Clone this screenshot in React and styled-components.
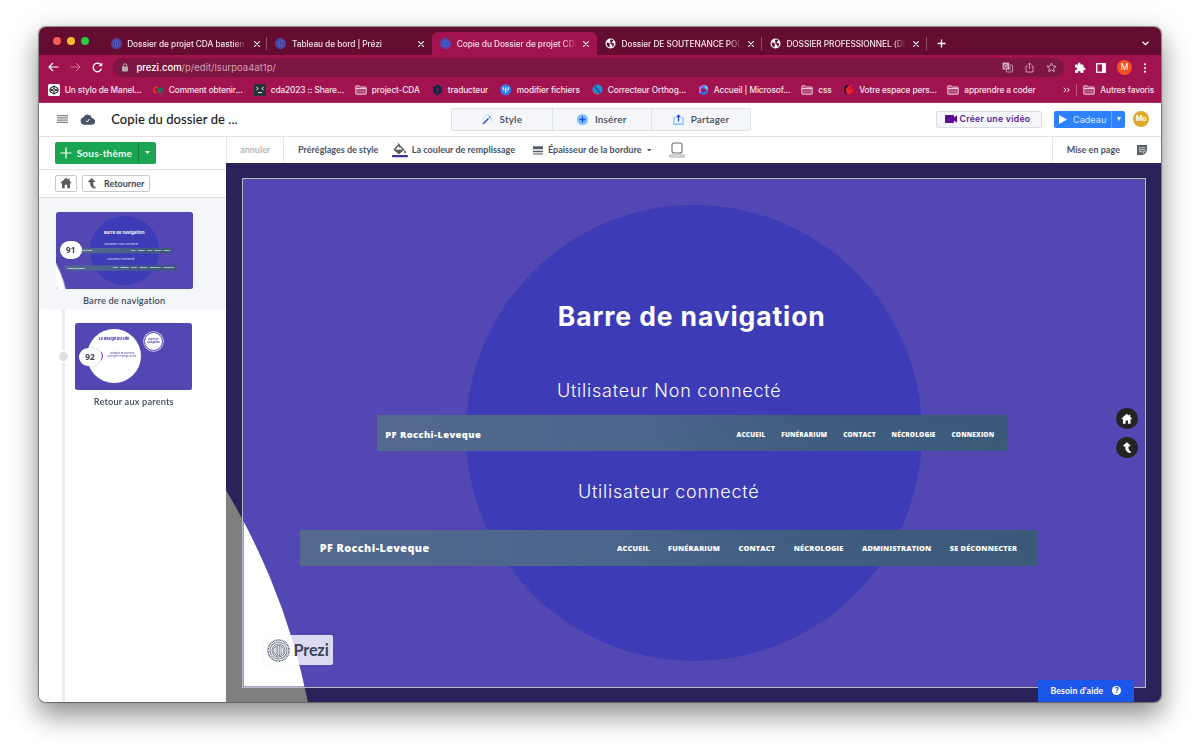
import React from 'react';
import styled, { createGlobalStyle, css } from 'styled-components';

const Global = createGlobalStyle`
  * { box-sizing: border-box; }
  body { margin: 0; background: #fff; font-family: Inter, sans-serif; overflow: hidden; }
`;

const Desktop = styled.div`
  width: 1200px;
  height: 753px;
  padding: 26.5px 39px 51px 38.7px;
  background: #fff;
`;

const Window = styled.div`
  width: 1122.3px;
  height: 675px;
  display: flex;
  flex-direction: column;
  border-radius: 7px;
  overflow: hidden;
  background: #fff;
  box-shadow: 0 0 1px 0.5px rgba(0, 0, 0, 0.4), 0 13px 26px 1px rgba(0, 0, 0, 0.38), 0 6px 40px rgba(0, 0, 0, 0.1);
`;

/* ---------- browser chrome ---------- */

const TabStrip = styled.div`
  height: 28.5px;
  flex: none;
  display: flex;
  background: #640d31;
`;

const Lights = styled.div`
  width: 64px;
  padding: 10.5px 0 0 14.3px;
  display: flex;
  gap: 5.8px;
`;

const Light = styled.i`
  width: 8px;
  height: 8px;
  border-radius: 50%;
  background: ${p => p.$color};
`;

const Tab = styled.div`
  position: relative;
  width: 164.8px;
  height: 23px;
  margin-top: 5.5px;
  padding: 0 7.8px 0 8px;
  display: flex;
  align-items: center;
  gap: 5.5px;
  color: #f4e6ec;
  ${p => p.$active && css`
    background: #a1134e;
    border-radius: 6px 6px 0 0;
  `}
  ${p => p.$divider && css`
    &::after {
      content: '';
      position: absolute;
      right: 0;
      top: 5px;
      width: 1px;
      height: 13px;
      background: #8f4f6b;
    }
  `}
`;

const TabTitle = styled.span`
  flex: 1;
  overflow: hidden;
  white-space: nowrap;
  font-size: 8.3px;
  font-weight: 500;
  line-height: 14px;
  letter-spacing: -0.06px;
  mask-image: linear-gradient(90deg, #000 88%, transparent 99%);
`;

const CloseMark = styled.svg`
  width: 6px;
  height: 6px;
  flex: none;
`;

const NewTab = styled.div`
  flex: 1;
  display: flex;
  align-items: center;
  justify-content: space-between;
  padding: 5px 12px 0 10.5px;
`;

const Toolbar = styled.div`
  height: 25px;
  flex: none;
  display: flex;
  align-items: center;
  padding: 0 12.5px 0 9.3px;
  background: #a1134e;
`;

const NavIcons = styled.div`
  width: 65px;
  display: flex;
  gap: 11.2px;
`;

const Omnibox = styled.div`
  width: 951.5px;
  height: 19.5px;
  margin-right: 9.5px;
  padding: 0 7px 0 6px;
  border-radius: 10px;
  display: flex;
  align-items: center;
  background: #7d1741;
`;

const Url = styled.span`
  flex: 1;
  padding-left: 5.5px;
  font-size: 9.5px;
  letter-spacing: 0.01px;
  color: #cf9fb2;
  b { font-weight: 500; color: #fff; }
`;

const OmniActions = styled.div`
  display: flex;
  gap: 11px;
`;

const ToolActions = styled.div`
  flex: 1;
  display: flex;
  align-items: center;
  justify-content: space-between;
`;

const Avatar = styled.span`
  width: ${p => p.$size}px;
  height: ${p => p.$size}px;
  border-radius: 50%;
  display: grid;
  place-items: center;
  color: #fff;
  background: ${p => p.$bg};
  font: ${p => p.$font};
`;

const Bookmarks = styled.div`
  height: 22.5px;
  flex: none;
  display: flex;
  align-items: center;
  padding: 0 0 2px 9.3px;
  background: #a1134e;
  border-bottom: 1px solid #b0315f;
`;

const Bookmark = styled.div`
  width: ${p => p.$w}px;
  flex: none;
  display: flex;
  align-items: center;
  gap: 4.8px;
  font-size: 8.3px;
  font-weight: 500;
  line-height: 14px;
  letter-spacing: -0.11px;
  white-space: nowrap;
  color: #f6e6ed;
  svg { flex: none; }
`;

const More = styled.div`
  width: 14.5px;
  flex: none;
  height: 12px;
  margin-right: 6px;
  display: flex;
  align-items: center;
  color: #fff;
  border-right: 1px solid #c05580;
`;

/* ---------- Prezi header ---------- */

const Header = styled.div`
  height: 34.3px;
  flex: none;
  display: grid;
  grid-template-columns: 412.5px 300px 1fr;
  align-items: center;
  border-bottom: 1px solid #dfe1e5;
  background: #fff;
`;

const DocTitle = styled.div`
  display: flex;
  align-items: center;
  padding-left: 18.5px;
  font: 500 13px/18px Lato, sans-serif;
  letter-spacing: 0.07px;
  color: #16181c;
  svg:first-child { margin-right: 12px; }
  svg + svg { margin-right: 16px; }
`;

const Segments = styled.div`
  height: 23px;
  display: grid;
  grid-template-columns: repeat(3, 1fr);
  border: 1px solid #dfe2e6;
  border-radius: 2px;
  background: #f5f6f9;
`;

const Segment = styled.div`
  display: flex;
  align-items: center;
  justify-content: center;
  gap: 7px;
  font: 600 10px/14px Lato, sans-serif;
  letter-spacing: 0.14px;
  color: #434c5c;
  & + & { border-left: 1px solid #dfe2e6; }
`;

const HeaderEnd = styled.div`
  display: flex;
  align-items: center;
  justify-content: flex-end;
  padding-right: 11.5px;
`;

const VideoButton = styled.div`
  width: 106px;
  height: 17px;
  margin-right: 12px;
  padding-left: 8.5px;
  display: flex;
  align-items: center;
  gap: 2px;
  border: 1px solid #dbdee4;
  border-radius: 2px;
  background: #f5f6f9;
  font-size: 8.7px;
  font-weight: 600;
  letter-spacing: 0.28px;
  white-space: nowrap;
  color: #5c1a8e;
`;

const GiftButton = styled.div`
  width: 71.5px;
  height: 17px;
  margin-right: 7.5px;
  display: flex;
  align-items: center;
  border-radius: 2px;
  background: #2f80fb;
  color: #d9e8ff;
  font-size: 9px;
  letter-spacing: 0.08px;
`;

const GiftMain = styled.span`
  width: 58px;
  height: 17px;
  padding-left: 5px;
  display: flex;
  align-items: center;
  gap: 6px;
  border-right: 1px solid #6aa5fd;
`;

const GiftMore = styled.span`
  flex: 1;
  display: grid;
  place-items: center;
`;

/* ---------- workspace ---------- */

const Workspace = styled.div`
  flex: 1;
  min-height: 0;
  display: grid;
  grid-template-columns: 187.3px 1fr;
`;

const Panel = styled.aside`
  display: flex;
  flex-direction: column;
  background: #fff;
  min-height: 0;
`;

const PanelRow = styled.div`
  height: ${p => p.$h}px;
  flex: none;
  display: flex;
  align-items: center;
  gap: 5.5px;
  padding: 0 16px;
  border-bottom: 1px solid #e0e2e6;
`;

const AddButton = styled.div`
  width: 101px;
  height: 22px;
  display: grid;
  grid-template-columns: 83.5px 1fr;
  border-radius: 2px;
  background: #1aa650;
  color: #f2fff6;
  font: 700 10px/22px Lato, sans-serif;
  letter-spacing: 0.2px;
`;

const AddMain = styled.span`
  display: flex;
  align-items: center;
  gap: 5px;
  padding-left: 5px;
`;

const AddMore = styled.span`
  display: grid;
  place-items: center;
  border-left: 1px solid #12843e;
`;

const SmallButton = styled.div`
  width: ${p => p.$w}px;
  height: 17px;
  display: flex;
  align-items: center;
  justify-content: center;
  gap: 6px;
  border: 1px solid #c6c9cf;
  border-radius: 2px;
  font: 700 9px/15px Lato, sans-serif;
  letter-spacing: 0.02px;
  color: #3f4754;
`;

const ActiveStep = styled.div`
  height: 111.5px;
  flex: none;
  padding: 14px 0 0 17px;
  background: #f5f6f9;
`;

const Timeline = styled.div`
  flex: 1;
  position: relative;
  padding: 14px 0 0 36.3px;
  &::before {
    content: '';
    position: absolute;
    left: 23px;
    top: 0;
    bottom: 0;
    width: 3px;
    background: #ebecee;
  }
`;

const TimelineDot = styled.i`
  position: absolute;
  left: 18px;
  top: 41px;
  width: 13px;
  height: 13px;
  border-radius: 50%;
  border: 2px solid #fff;
  background: #dcdee3;
`;

const Thumb = styled.div`
  position: relative;
  width: ${p => p.$w}px;
  height: ${p => p.$h}px;
  border-radius: 2.5px;
  overflow: hidden;
  background: #5347b3;
`;

const ThumbWrap = styled.div`
  position: relative;
  width: ${p => p.$w}px;
`;

const Mini = styled.div`
  width: 904px;
  height: 510px;
  position: relative;
  transform: scale(0.1517);
  transform-origin: 0 0;
`;

const StepBadge = styled.span`
  position: absolute;
  left: 4px;
  top: ${p => p.$top}px;
  width: 22px;
  height: 18px;
  border-radius: 9px;
  display: grid;
  place-items: center;
  background: #fff;
  box-shadow: 0 0 2px rgba(60, 60, 90, 0.35);
  font: 700 8.3px/18px 'Open Sans', sans-serif;
  color: #3b424e;
`;

const StepName = styled.div`
  margin-top: 5px;
  text-align: center;
  font: 600 9.3px/13px Lato, sans-serif;
  letter-spacing: 0.14px;
  color: #444d5b;
`;

const ParentDisc = styled.div`
  position: absolute;
  left: 12px;
  top: 6px;
  width: 54px;
  height: 54px;
  border-radius: 50%;
  background: #fff;
  color: #4338b5;
  text-align: center;
`;

const DiscTitle = styled.div`
  margin: 6.5px -4px 0 -4px;
  font-size: 3.7px;
  font-weight: 800;
  line-height: 5px;
  white-space: nowrap;
`;

const DiscText = styled.div`
  margin: 12.5px 2px 0 18px;
  font-size: 2.2px;
  line-height: 2.7px;
  white-space: nowrap;
`;

const DiscBrace = styled.svg`
  position: absolute;
  left: 16px;
  top: 28px;
`;

const ChildDisc = styled.div`
  position: absolute;
  left: 69px;
  top: 8.5px;
  width: 19px;
  height: 19px;
  border-radius: 50%;
  border: 1px solid #5347b3;
  box-shadow: 0 0 0 0.8px #d8d4f2;
  background: #fff;
  padding-top: 6px;
  text-align: center;
  font-size: 2.4px;
  font-weight: 700;
  line-height: 2.8px;
  color: #4338b5;
`;

const Stage = styled.main`
  min-width: 0;
  min-height: 0;
  display: flex;
  flex-direction: column;
`;

const StyleBar = styled.div`
  height: 26.5px;
  flex: none;
  display: flex;
  align-items: stretch;
  padding-right: 14px;
  border-left: 1px solid #e3e5e8;
  font: 700 9px/12px Lato, sans-serif;
  letter-spacing: 0.02px;
  color: #4a5261;
  white-space: nowrap;
`;

const StyleItem = styled.div`
  display: flex;
  align-items: center;
  gap: ${p => p.$gap || 0}px;
  margin-left: ${p => p.$ml || 0}px;
`;

const Undo = styled(StyleItem)`
  width: 57.5px;
  justify-content: center;
  border-right: 1px solid #e3e5e8;
  color: #b3b7be;
`;

const Spacer = styled.div`
  flex: 1;
`;

const LayoutItem = styled(StyleItem)`
  padding-left: 13.5px;
  border-left: 1px solid #e3e5e8;
`;

const Canvas = styled.div`
  flex: 1;
  position: relative;
  overflow: hidden;
  background: #5347b3;
`;

const SlideOrigin = styled.div`
  position: absolute;
  left: 16px;
  top: 15.5px;
  width: 904px;
  height: 510px;
`;

const Disc = styled.i`
  position: absolute;
  left: ${p => p.$cx - p.$r}px;
  top: ${p => p.$cy - p.$r}px;
  width: ${p => p.$r * 2}px;
  height: ${p => p.$r * 2}px;
  border-radius: 50%;
  background: ${p => p.$color};
`;

const SlideTitle = styled.div`
  position: absolute;
  left: 315.8px;
  top: 124.3px;
  font-size: 26.5px;
  font-weight: 700;
  line-height: 1;
  letter-spacing: 0.88px;
  white-space: nowrap;
  color: #fff;
`;

const SlideSub = styled.div`
  position: absolute;
  left: ${p => p.$x}px;
  top: ${p => p.$y}px;
  font-size: 18px;
  font-weight: 300;
  line-height: 1;
  letter-spacing: 0.76px;
  white-space: nowrap;
  color: #fff;
`;

const SiteNav = styled.div`
  position: absolute;
  left: ${p => p.$x}px;
  top: ${p => p.$y}px;
  width: ${p => p.$w}px;
  height: 35.7px;
  padding: ${p => p.$pad};
  display: flex;
  align-items: center;
  justify-content: space-between;
  color: #fff;
  font: 800 ${p => p.$size}px/1 'Open Sans', sans-serif;
  white-space: nowrap;
  background: linear-gradient(170deg, rgba(255,255,255,0) 40%, rgba(90,160,130,.1)), linear-gradient(90deg, #53698f, #4b658c 42%, #3f5a80 68%, #385379);
`;

const SiteBrand = styled.span`
  letter-spacing: ${p => p.$ls}px;
`;

const SiteMenu = styled.span`
  display: flex;
  gap: ${p => p.$gap}px;
  padding-top: ${p => p.$drop || 0}px;
  font-size: ${p => p.$size}px;
  letter-spacing: 0.16px;
`;

const Frame = styled.div`
  position: absolute;
  left: 16px;
  top: 15px;
  width: 904px;
  height: 509.5px;
  border: 1px solid #b9b9cb;
  box-shadow: 0 0 0 200px rgba(0, 0, 0, 0.5), inset 0 0 0 0.6px #55517c;
`;

const PreziMark = styled.div`
  position: absolute;
  left: 38px;
  top: 472px;
  width: 69px;
  height: 30px;
  padding: 0 0 0 3.5px;
  display: flex;
  align-items: center;
  gap: 3px;
  border-radius: 2px;
  background: rgba(255, 255, 255, 0.8);
  box-shadow: 0 0 1px rgba(120, 120, 140, 0.35);
  font: 700 16.2px/30px Lato, sans-serif;
  letter-spacing: -0.15px;
  color: #3d4658;
`;

const FloatingNav = styled.div`
  position: absolute;
  left: 890.5px;
  top: 244.3px;
  display: flex;
  flex-direction: column;
  gap: 7.5px;
`;

const RoundButton = styled.span`
  width: 21.5px;
  height: 21.5px;
  border-radius: 50%;
  display: grid;
  place-items: center;
  background: #242322;
`;

const HelpTab = styled.div`
  position: absolute;
  left: 812px;
  bottom: 0;
  width: 96px;
  height: 21.5px;
  padding-left: 12.5px;
  display: flex;
  align-items: center;
  gap: 9px;
  border-radius: 2px 2px 0 0;
  background: #1d56ea;
  color: #fff;
  font: 700 8.7px/20px Lato, sans-serif;
  letter-spacing: 0.13px;
`;

const HelpMark = styled.span`
  width: 9px;
  height: 9px;
  border-radius: 50%;
  display: grid;
  place-items: center;
  background: #fff;
  color: #1d56ea;
  font: 800 7px/9px Inter, sans-serif;
`;

/* ---------- icons ---------- */

const PreziFav = () => (
  <svg width="11" height="11" viewBox="0 0 22 22" fill="none" stroke="#4468d8">
    <circle cx="11" cy="11" r="10.500" fill="#4048b0" fillOpacity=".75" stroke="none" />
    <circle cx="11" cy="11" r="9.600" strokeWidth="2" strokeDasharray="1.600 .7" />
    <circle cx="11" cy="11" r="6.400" strokeWidth="1.600" />
    <path d="M9 6v10M13 6v10" strokeWidth="1.600" />
  </svg>
);

const GlobeFav = () => (
  <svg width="11" height="11" viewBox="0 0 22 22">
    <circle cx="11" cy="11" r="10" fill="#fff" />
    <path d="M3.500 9c3 0 4.500 1 6 2.600 1 1.500-.4 2.400-.4 4.400v3C5 18 2.500 14 3.500 9zM11 3c2-.6 4.500.6 6 2.500-1 2-3 1.500-3.500 3s2.500 2 4.600 2.300C18.500 14 17 17 15 18c-.6-2 .3-4-2-5-2-1-3-2-2-4 .7-1.300-1.500-2-1-3.500z" fill="#640d31" />
  </svg>
);

const Close = () => (
  <CloseMark viewBox="0 0 6 6" stroke="#fff" strokeWidth="1.1" strokeLinecap="round"><path d="M.6.6l4.800 4.800M5.400.6L.6 5.400" /></CloseMark>
);

const Folder = () => (
  <svg width="12" height="10" viewBox="0 0 24 20" fill="#b5507a" stroke="#f0d3df" strokeWidth="1.700">
    <path d="M1.500 17.500v-15a1 1 0 0 1 1-1h6l2 2.500h11a1 1 0 0 1 1 1v12.500a1 1 0 0 1-1 1h-19a1 1 0 0 1-1-1z" />
    <path d="M1.500 7h21" />
  </svg>
);

const HomeIcon = ({ size, color }) => (
  <svg width={size} height={size} viewBox="0 0 24 24" fill={color}>
    <path d="M12 1.500L1 11.500 2.500 13 4 12v10.500h5.500V15.500h5v7H20V12l1.500 1L23 11.500 19.500 8.200V3.500h-3v2z" />
  </svg>
);

const BackIcon = ({ size, color }) => (
  <svg width={size} height={size} viewBox="0 0 24 24" fill={color} stroke={color} strokeWidth="1" strokeLinejoin="round">
    <path d="M10.500 1L3 7.500l1 1.500h3.500c0 7 1 13.500 11 14.500l1.500-1.500C15 20 13.500 16 13.500 9H17l1-1.500z" />
  </svg>
);

const Caret = ({ w = 5, color }) => (
  <svg width={w} height={w * 0.6} viewBox="0 0 10 6" fill={color}><path d="M0 0h10L5 6z" /></svg>
);

const CodepenFav = () => (
  <svg width="12" height="12" viewBox="0 0 24 24" fill="none" stroke="#151515" strokeWidth="2">
    <rect width="24" height="24" rx="3" fill="#fff" stroke="none" />
    <path d="M12 4l8 5v6l-8 5-8-5V9zM12 4v5M12 15v5M4 9l8 6 8-6M4 15l8-6 8 6" />
  </svg>
);
const CwFav = () => (
  <svg width="12" height="10" viewBox="0 0 24 20" fill="none" strokeWidth="3.200">
    <path d="M10 5.500C6 3 3.500 6 3.500 10s3 7 6.500 4" stroke="#e0352c" />
    <path d="M12 5l2.500 10L17 8l2.500 7L22 5" stroke="#2b6a55" />
  </svg>
);
const TerminalFav = () => (
  <svg width="12" height="12" viewBox="0 0 24 24" fill="none" stroke="#e8e8e8" strokeWidth="2">
    <rect width="24" height="24" rx="2" fill="#263330" stroke="none" />
    <path d="M4.500 6l4 3-4 3M19.500 6l-4 3 4 3M8 17h8" />
  </svg>
);
const TranslatorFav = () => (
  <svg width="11" height="12" viewBox="0 0 22 24"><path d="M11 1l9 5.500v10L11 22v2l-3-3-6-4.500v-10z" fill="#10294a" /><path d="M8 8l6 4-6 4" stroke="#7d2350" strokeWidth="2" fill="none" /></svg>
);
const FilesFav = () => (
  <svg width="11.500" height="11.500" viewBox="0 0 24 24"><circle cx="12" cy="12" r="11.500" fill="#2f7df0" /><path d="M6.500 7v3c0 1.500.8 2.500 2.500 2.500M17.500 7v3c0 1.500-.8 2.500-2.500 2.500M12 7v11" stroke="#fff" strokeWidth="2.400" fill="none" /></svg>
);
const SpellFav = () => (
  <svg width="11" height="12" viewBox="0 0 22 24"><circle cx="11" cy="11" r="10" fill="#1f8fd6" /><path d="M5 4l11 14" stroke="#1a4e86" strokeWidth="2.500" /><path d="M1 15c1 5 6 8 13 7l-3-2z" fill="#d8324a" /></svg>
);
const OfficeFav = () => (
  <svg width="11" height="12" viewBox="0 0 22 24"><path d="M11 1l9 5v11l-9 6-9-6V6z" fill="#2f6fe0" /><path d="M11 1L2 6v11l4 2.500V9l5-3z" fill="#a56be8" /><path d="M13 1l7 5v6l-7-4z" fill="#5bc8f5" /><path d="M11 8l4 2.500v4L11 17l-4-2.500v-4z" fill="#a1134e" /></svg>
);
const SpaceFav = () => (
  <svg width="11" height="12" viewBox="0 0 22 24"><path d="M12 1C4 2 1 8 2 14c1 4 4 7 8 8C5 16 5 6 12 1z" fill="#23101a" /><path d="M20 3c-8 0-14 4-14 10 0 5 2 8 6 8 4 0 4-2 5-4h2l1-8c-5-1-8 1-8 5 0-5 3-8 8-11z" fill="#ee1c2e" /></svg>
);

const PreziLogo = () => (
  <svg width="23" height="23" viewBox="0 0 46 46" fill="none" stroke="#4b5364">
    <circle cx="23" cy="23" r="21" strokeWidth="3" strokeDasharray="1.700 1.300" />
    <circle cx="23" cy="23" r="16.800" strokeWidth="2.600" strokeDasharray="1.500 1" />
    <circle cx="23" cy="23" r="13" strokeWidth="1.600" />
    <circle cx="23" cy="23" r="10" strokeWidth="1.400" />
    <path d="M18 15.500v15M21.300 14v18M24.700 14v18M28 15.500v15" strokeWidth="1.300" />
  </svg>
);

/* ---------- content ---------- */

const tabs = [
  { title: 'Dossier de projet CDA bastien r', Icon: PreziFav, divider: true },
  { title: 'Tableau de bord | Prézi', Icon: PreziFav },
  { title: 'Copie du Dossier de projet CDA', Icon: PreziFav, active: true },
  { title: 'Dossier DE SOUTENANCE POU', Icon: GlobeFav, divider: true },
  { title: 'DOSSIER PROFESSIONNEL (DP', Icon: GlobeFav, divider: true },
];

const bookmarks = [
  ['Un stylo de Manel...', CodepenFav, 104],
  ['Comment obtenir...', CwFav, 102],
  ['cda2023 :: Share...', TerminalFav, 101],
  ['project-CDA', Folder, 77],
  ['traducteur', TranslatorFav, 68.5],
  ['modifier fichiers', FilesFav, 91.5],
  ['Correcteur Orthog...', SpellFav, 106],
  ['Accueil | Microsof...', OfficeFav, 103.5],
  ['css', Folder, 42],
  ['Votre espace pers...', SpaceFav, 104],
  ['apprendre a coder', Folder, 115.5],
];

const guestMenu = ['ACCUEIL', 'FUNÉRARIUM', 'CONTACT', 'NÉCROLOGIE', 'CONNEXION'];
const memberMenu = ['ACCUEIL', 'FUNÉRARIUM', 'CONTACT', 'NÉCROLOGIE', 'ADMINISTRATION', 'SE DÉCONNECTER'];

const SlideContent = () => (
  <>
    <Disc $cx={451.8} $cy={254.3} $r={228} $color="#3d3bb6" />
    <Disc $cx={-588.9} $cy={654.7} $r={667.7} $color="#fff" />
    <SlideTitle>Barre de navigation</SlideTitle>
    <SlideSub $x={315} $y={203.3}>Utilisateur Non connecté</SlideSub>
    <SiteNav $x={135} $y={236.6} $w={630} $size={9.4} $pad="2px 12.7px 0 8.3px">
      <SiteBrand $ls={0.4}>PF Rocchi-Leveque</SiteBrand>
      <SiteMenu $gap={15.9} $size={6.5} $drop={1.2}>{guestMenu.map(m => <span key={m}>{m}</span>)}</SiteMenu>
    </SiteNav>
    <SlideSub $x={336} $y={304.3}>Utilisateur connecté</SlideSub>
    <SiteNav $x={58.3} $y={351.4} $w={737} $size={10.8} $pad="0.5px 20.2px 0 19.5px">
      <SiteBrand $ls={0.43}>PF Rocchi-Leveque</SiteBrand>
      <SiteMenu $gap={18.4} $size={7.4}>{memberMenu.map(m => <span key={m}>{m}</span>)}</SiteMenu>
    </SiteNav>
  </>
);

const BrowserChrome = () => (
  <>
    <TabStrip>
      <Lights>
        <Light $color="#fb5d56" /><Light $color="#fcbb2e" /><Light $color="#2bc840" />
      </Lights>
      {tabs.map(({ title, Icon, active, divider }) => (
        <Tab key={title} $active={active} $divider={divider}>
          <Icon /><TabTitle>{title}</TabTitle><Close />
        </Tab>
      ))}
      <NewTab>
        <svg width="9" height="9" viewBox="0 0 9 9" stroke="#fff" strokeWidth="1.300"><path d="M4.500.5v8M.5 4.500h8" /></svg>
        <svg width="7" height="5" viewBox="0 0 7 5" fill="none" stroke="#fff" strokeWidth="1.300"><path d="M.5.7l3 3 3-3" /></svg>
      </NewTab>
    </TabStrip>
    <Toolbar>
      <NavIcons>
        <svg width="11" height="10" viewBox="0 0 22 20" fill="none" stroke="#fff" strokeWidth="2.400"><path d="M21 10H3M10 2l-8 8 8 8" /></svg>
        <svg width="11" height="10" viewBox="0 0 22 20" fill="none" stroke="#d07a9c" strokeWidth="2"><path d="M1 10h18M12 2l8 8-8 8" /></svg>
        <svg width="11" height="11" viewBox="0 0 22 22" fill="none" stroke="#fff" strokeWidth="2.600"><path d="M19 13.500A8.500 8.500 0 1 1 17 5l2 2.500" /><path d="M20.500 1v7.500H13z" fill="#fff" stroke="none" /></svg>
      </NavIcons>
      <Omnibox>
        <svg width="12" height="9" viewBox="-4 0 24 18"><rect x="2" y="7" width="12" height="10" rx="1.500" fill="#b9a9b1" /><path d="M4.500 8V5a3.500 3.500 0 0 1 7 0v3" fill="none" stroke="#b9a9b1" strokeWidth="2" /></svg>
        <Url><b>prezi.com</b>/p/edit/lsurpoa4at1p/</Url>
        <OmniActions>
          <svg width="11" height="11" viewBox="0 0 22 22"><rect x="1" y="1" width="13" height="14" rx="1.500" fill="#d0b0be" /><rect x="9" y="6" width="12" height="14" rx="1" fill="none" stroke="#d0b0be" strokeWidth="1.600" /><path d="M10.500 7.500A3.500 3.500 0 1 0 10.500 10H7.500" fill="none" stroke="#7d1741" strokeWidth="1.500" /><path d="M12.500 10.500h6M15.500 9v1.500c0 3-1.500 5-3.500 6M14 12c.5 2 2 3.500 4 4.500" fill="none" stroke="#d0b0be" strokeWidth="1.300" /></svg>
          <svg width="11" height="11" viewBox="0 0 22 22" fill="none" stroke="#d9a8bb" strokeWidth="1.800"><path d="M7 8H4v12h14V8h-3M11 14V2M7.500 5.500L11 2l3.500 3.500" /></svg>
          <svg width="11" height="11" viewBox="0 0 22 22" fill="none" stroke="#e0bccb" strokeWidth="1.700"><path d="M11 2l2.700 6 6.500.6-5 4.300 1.500 6.400L11 15.900l-5.700 3.400 1.500-6.400-5-4.300 6.500-.6z" /></svg>
        </OmniActions>
      </Omnibox>
      <ToolActions>
        <svg width="12" height="12" viewBox="0 0 24 24" fill="#fff"><path d="M20.500 11H19V7a2 2 0 0 0-2-2h-4V3.500a2.500 2.500 0 0 0-5 0V5H4a2 2 0 0 0-2 2v3.800h1.500a2.700 2.700 0 0 1 0 5.400H2V20a2 2 0 0 0 2 2h3.800v-1.500a2.700 2.700 0 0 1 5.400 0V22H17a2 2 0 0 0 2-2v-4h1.500a2.500 2.500 0 0 0 0-5z" /></svg>
        <svg width="10" height="10" viewBox="0 0 20 20"><rect x="1.500" y="1.500" width="17" height="17" fill="none" stroke="#fff" strokeWidth="2.600" /><path d="M12 1h7v18h-7z" fill="#fff" /></svg>
        <Avatar $size={15} $bg="#f4511e" $font="400 8.5px/15px Inter, sans-serif">M</Avatar>
        <svg width="6" height="10" viewBox="0 0 6 10" fill="#fff"><circle cx="3" cy="1.300" r="1.100" /><circle cx="3" cy="5" r="1.100" /><circle cx="3" cy="8.700" r="1.100" /></svg>
      </ToolActions>
    </Toolbar>
    <Bookmarks>
      {bookmarks.map(([name, Icon, w]) => <Bookmark key={name} $w={w}><Icon />{name}</Bookmark>)}
      <More><svg width="7" height="6" viewBox="0 0 14 12" fill="none" stroke="#fff" strokeWidth="1.900"><path d="M1.500 1.500L6 6l-4.500 4.500M8 1.500L12.500 6 8 10.500" /></svg></More>
      <Bookmark $w={72}><Folder />Autres favoris</Bookmark>
    </Bookmarks>
  </>
);

const AppHeader = () => (
  <Header>
    <DocTitle>
      <svg width="11" height="8" viewBox="0 0 11 8" stroke="#62666e" strokeWidth="1"><path d="M0 .7h11M0 2.900h11M0 5.100h11M0 7.300h11" /></svg>
      <svg width="15" height="11" viewBox="0 0 30 22"><path d="M24 8.500A9 9 0 0 0 7 6.500 7.700 7.700 0 0 0 7.500 21.500h16a6.500 6.500 0 0 0 .5-13z" fill="#46556a" /><path d="M12 13.500l2.500 2.500 4.500-6" fill="none" stroke="#fff" strokeWidth="2" /></svg>
      Copie du dossier de ...
    </DocTitle>
    <Segments>
      <Segment>
        <svg width="11" height="11" viewBox="0 0 22 22" fill="none"><path d="M2 20L13 9" stroke="#2447d8" strokeWidth="3" /><path d="M14.500 7.500l2.500-2.500" stroke="#2b6cf5" strokeWidth="3" /><path d="M3 3l2 2M8.500 1v3M13 2v2M20 9.500h-3M20 1l-1.500 1.500M3 9h2M19 14v-1.500" stroke="#74b8fb" strokeWidth="1.500" /></svg>
        Style
      </Segment>
      <Segment>
        <svg width="11" height="11" viewBox="0 0 22 22"><circle cx="11" cy="11" r="11" fill="#7cc0fc" /><path d="M11 5v12M5 11h12" stroke="#1f48d6" strokeWidth="2.600" /></svg>
        Insérer
      </Segment>
      <Segment>
        <svg width="11" height="11" viewBox="0 0 22 22" fill="none"><path d="M4.500 8H2v12.500h18V8h-2.500" stroke="#7cc4fa" strokeWidth="2.600" /><path d="M11 15V3" stroke="#2447e8" strokeWidth="2.600" /><path d="M6 6.500L11 .5l5 6z" fill="#2447e8" /></svg>
        Partager
      </Segment>
    </Segments>
    <HeaderEnd>
      <VideoButton>
        <svg width="12" height="8" viewBox="0 0 24 16" fill="#5e0a99"><path d="M1.500 0h15A1.500 1.500 0 0 1 18 1.500V5l6-4.500v15L18 11v3.500a1.500 1.500 0 0 1-1.500 1.500h-15A1.500 1.500 0 0 1 0 14.500v-13A1.500 1.500 0 0 1 1.500 0z" /></svg>
        Créer une vidéo
      </VideoButton>
      <GiftButton>
        <GiftMain><svg width="8" height="9" viewBox="0 0 8 9" fill="#fff"><path d="M0 0l8 4.500L0 9z" /></svg>Cadeau</GiftMain>
        <GiftMore><svg width="4" height="4" viewBox="0 0 4 4" fill="#fff"><path d="M0 0h4L2 4z" /></svg></GiftMore>
      </GiftButton>
      <Avatar $size={16.5} $bg="#e0a92c" $font="700 7.2px/16px Inter, sans-serif">Mo</Avatar>
    </HeaderEnd>
  </Header>
);

const StepPanel = () => (
  <Panel>
    <PanelRow $h={33}>
      <AddButton>
        <AddMain>
          <svg width="12" height="12" viewBox="0 0 12 12" stroke="#fff" strokeWidth="1.200"><path d="M6 .5v11M.5 6h11" /></svg>
          Sous-thème
        </AddMain>
        <AddMore><Caret color="#fff" /></AddMore>
      </AddButton>
    </PanelRow>
    <PanelRow $h={28}>
      <SmallButton $w={22}><HomeIcon size={12} color="#5c5c5c" /></SmallButton>
      <SmallButton $w={67.5}><BackIcon size={10.5} color="#5c5c5c" />Retourner</SmallButton>
    </PanelRow>
    <ActiveStep>
      <ThumbWrap $w={137}>
        <Thumb $w={137} $h={77.3}><Mini><SlideContent /></Mini></Thumb>
        <StepBadge $top={29.5}>91</StepBadge>
        <StepName>Barre de navigation</StepName>
      </ThumbWrap>
    </ActiveStep>
    <Timeline>
      <TimelineDot />
      <ThumbWrap $w={117.5}>
        <Thumb $w={117.5} $h={66.5}>
          <ParentDisc>
            <DiscTitle>Le design du site</DiscTitle>
            <DiscText>Utilisation de Bootstrap<br />pour gérer le design du site</DiscText>
          </ParentDisc>
          <ChildDisc>Barre de<br />navigation</ChildDisc>
        </Thumb>
        <StepBadge $top={24.5}>92</StepBadge>
        <DiscBrace width="15" height="10" viewBox="0 0 15 10"><path d="M10 .8c1.500 1 .5 3 1.800 4.200-1.300 1.200-.3 3.200-1.800 4.200" fill="none" stroke="#7c2ae0" /></DiscBrace>
        <StepName>Retour aux parents</StepName>
      </ThumbWrap>
    </Timeline>
  </Panel>
);

const StyleTools = () => (
  <StyleBar>
    <Undo>annuler</Undo>
    <StyleItem $ml={13.5}>Préréglages de style</StyleItem>
    <StyleItem $ml={14} $gap={3.5}>
      <svg width="16" height="16" viewBox="0 0 32 32"><rect x="0" y="26" width="32" height="4.500" rx="1.500" fill="#3c33a6" /><path d="M13 6l10 9-9 8-9.500-7.500z" fill="#fff" stroke="#5b5b5b" strokeWidth="2.600" /><path d="M5 16h17.500L14 23zM11.500 1.500l4 4.500v6" fill="#5b5b5b" stroke="#5b5b5b" strokeWidth="1.500" /><path d="M26 16c1.500 2.500 2 3.500 2 4.500a2 2 0 0 1-4 0c0-1 .5-2 2-4.500z" fill="#5b5b5b" /></svg>
      La couleur de remplissage
    </StyleItem>
    <StyleItem $ml={17.5} $gap={5.5}>
      <svg width="10" height="9" viewBox="0 0 10 9" fill="#555b66"><path d="M0 .3h10v3H0zM0 4.800h10v1.400H0zM0 7.600h10v.9H0z" /></svg>
      Épaisseur de la bordure
      <Caret w={4.5} color="#4a5261" />
    </StyleItem>
    <StyleItem $ml={17.5}>
      <svg width="16" height="16" viewBox="0 0 16 16" fill="none" stroke="#6b6b6b"><rect x="3" y="1" width="10" height="10" rx="2" strokeWidth="1.100" /><rect x=".6" y="13" width="14.800" height="2" rx=".6" strokeWidth=".8" stroke="#8c8c8c" /></svg>
    </StyleItem>
    <Spacer />
    <LayoutItem $gap={17}>
      Mise en page
      <svg width="10" height="10" viewBox="0 0 20 20"><path d="M1.500 0h17A1.500 1.500 0 0 1 20 1.500V13l-7 7H1.500A1.500 1.500 0 0 1 0 18.500v-17A1.500 1.500 0 0 1 1.500 0z" fill="#555a63" /><path d="M3.500 5.500h13M3.500 9.500h13M3.500 13.500H10" stroke="#fff" strokeWidth="1.500" /><path d="M12.500 19.500v-7H20" fill="none" stroke="#fff" strokeWidth="1.200" /></svg>
    </LayoutItem>
  </StyleBar>
);

export default function App() {
  return (
    <Desktop>
      <Global />
      <Window>
        <BrowserChrome />
        <AppHeader />
        <Workspace>
          <StepPanel />
          <Stage>
            <StyleTools />
            <Canvas>
              <SlideOrigin><SlideContent /></SlideOrigin>
              <Frame />
              <PreziMark><PreziLogo />Prezi</PreziMark>
              <FloatingNav>
                <RoundButton><HomeIcon size={11.5} color="#fff" /></RoundButton>
                <RoundButton><BackIcon size={11} color="#fff" /></RoundButton>
              </FloatingNav>
              <HelpTab>Besoin d'aide<HelpMark>?</HelpMark></HelpTab>
            </Canvas>
          </Stage>
        </Workspace>
      </Window>
    </Desktop>
  );
}
